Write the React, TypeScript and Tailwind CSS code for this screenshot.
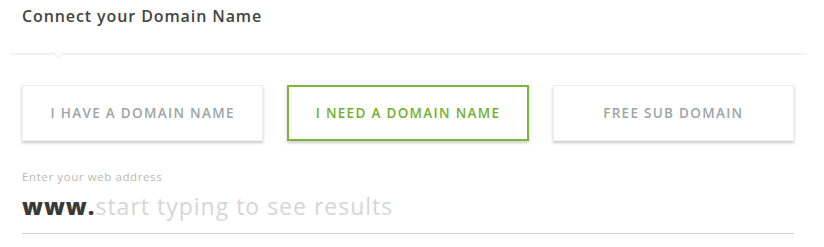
export default function App() {
  const options = [
    { label: "I HAVE A DOMAIN NAME", active: false },
    { label: "I NEED A DOMAIN NAME", active: true },
    { label: "FREE SUB DOMAIN", active: false },
  ];

  return (
    <div
      className="w-[824px] h-[247px] bg-white overflow-hidden"
      style={{ fontFamily: '"Open Sans", "Noto Sans", Arial, sans-serif' }}
    >
      {/* Header */}
      <div className="px-[22px] pt-[4px] h-[53px]">
        <h2 className="text-[16px] font-semibold text-[#444] tracking-[0.9px]">
          Connect your Domain Name
        </h2>
      </div>

      {/* Separator with notch */}
      <div className="relative ml-[10px] w-[797px] h-[2px] bg-[#f3f3f3]">
        <div className="absolute left-[44px] top-[-5px] w-[9px] h-[9px] rotate-45 bg-white border-r border-b border-[#ececec]" />
      </div>

      {/* Options */}
      <div className="px-[22px] pt-[30px] grid grid-cols-3 gap-[24px] w-[816px]">
        {options.map((o) => (
          <button
            key={o.label}
            className={
              o.active
                ? "h-[56px] bg-white border-2 border-[#7ab83a] shadow-[0_2px_3px_rgba(0,0,0,0.2)] text-[#72b02c] text-[13.5px] font-semibold tracking-[1.3px]"
                : "h-[56px] bg-white border border-[#eeeeee] shadow-[0_2px_3px_rgba(0,0,0,0.22)] text-[#9ea4a7] text-[13.5px] font-semibold tracking-[1.3px]"
            }
          >
            {o.label}
          </button>
        ))}
      </div>

      {/* Web address input */}
      <div className="px-[22px] pt-[29px]">
        <div className="text-[11.5px] text-[#b8b8b8] leading-[14px] tracking-[0.6px]">
          Enter your web address
        </div>
        <div className="w-[772px] mt-[7px] pb-[12px] border-b border-[#cfcfcf] flex items-baseline leading-[30px] tracking-[1px]">
          <span className="text-[23px] font-extrabold text-[#3a3a3a]">www.</span>
          <span className="text-[23px] text-[#d6d6d6]">start typing to see results</span>
        </div>
      </div>
    </div>
  );
}
